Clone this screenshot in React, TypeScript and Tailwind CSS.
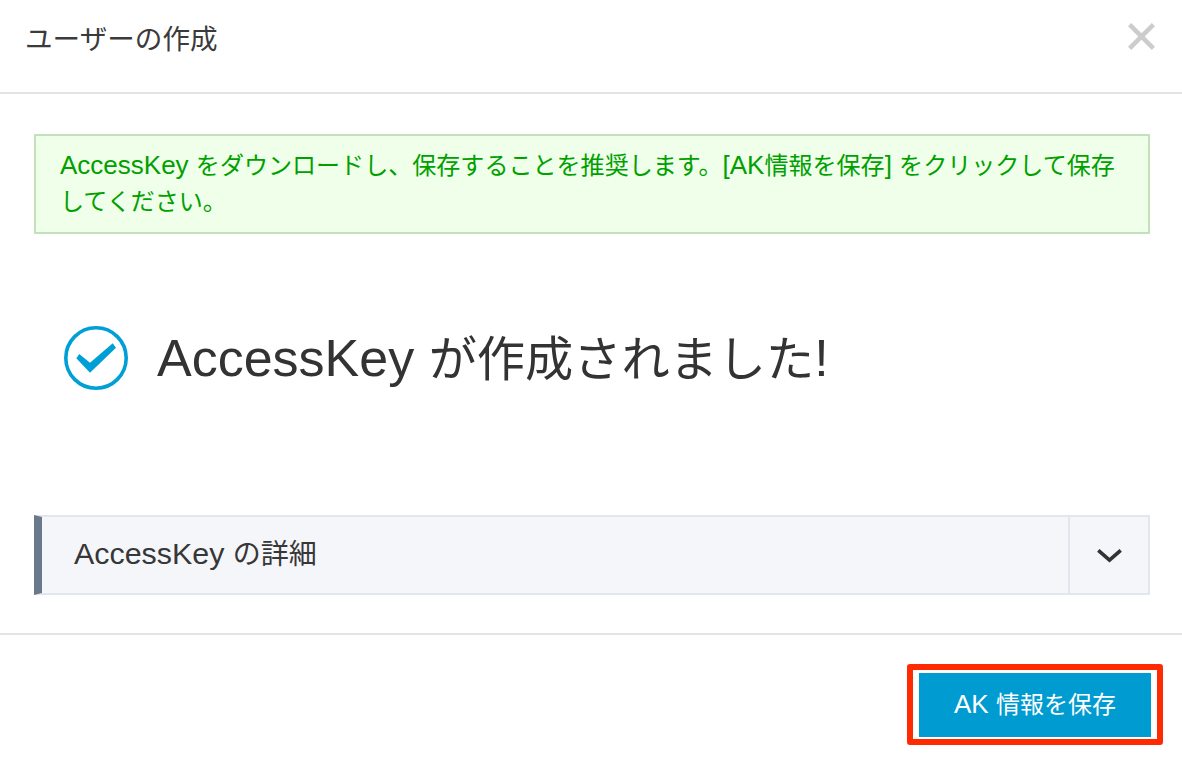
const FONT = "font-['Liberation_Sans','Noto_Sans_CJK_JP',sans-serif]";

export default function App() {
  return (
    <div className={`${FONT} w-[1182px] h-[774px] bg-white flex flex-col overflow-hidden text-[#333]`}>
      {/* Header */}
      <div className="h-[94px] shrink-0 border-b-2 border-[#e4e4e4] flex items-start justify-between pl-[25px] pr-[27px]">
        <h1 className="text-[27.6px] leading-[40px] mt-[20px] font-normal text-[#3b3b3b]">ユーザーの作成</h1>
        <svg width="27" height="27" viewBox="0 0 27 27" fill="none" stroke="#cccccc" strokeWidth="4.5" className="mt-[23px]">
          <path d="M1.6 1.6 L25.4 25.4 M25.4 1.6 L1.6 25.4" />
        </svg>
      </div>

      {/* Body */}
      <div className="h-[541px] shrink-0 border-b-2 border-[#e4e4e4] px-[32px] pt-[40px] flex flex-col">
        <div className="ml-[2px] w-[1116px] h-[100px] border-2 border-[#c3e0b8] bg-[#f0ffe9] pl-[24px] pr-[20px] pt-[11px] text-[24.05px] leading-[36px] text-[#00a000]">
          <span className="text-[26px]">AccessKey </span>をダウンロードし、保存することを推奨します。<span className="text-[26px]">[AK</span>情報を保存<span className="text-[26px]">] </span>をクリックして保存してください。
        </div>

        <div className="flex items-center ml-[32px] mt-[92px] h-[64px]">
          <svg width="64" height="64" viewBox="0 0 64 64" fill="none" className="shrink-0">
            <circle cx="32" cy="32" r="30.2" stroke="#00a0d6" strokeWidth="3.6" />
            <path d="M12.3 32.3 L15.3 28 L26 36.7 L48.7 17.3 L52 21.7 L26 46.7 Z" fill="#00a0d6" />
          </svg>
          <div className="ml-[29px] text-[48.2px] leading-[64px] text-[#333]">
            <span className="text-[52px]">AccessKey </span>が作成されました<span className="text-[52px]">!</span>
          </div>
        </div>

        <div className="ml-[2px] mt-[125px] w-[1116px] h-[80px] flex border-2 border-l-[8px] border-[#e2e6ee] border-l-[#69788a] bg-[#f5f6fa]">
          <div className="flex-1 pl-[32px] text-[28px] leading-[72px] text-[#373737]">
            <span className="text-[30.4px]">AccessKey </span>の詳細
          </div>
          <div className="w-[80px] border-l-2 border-[#e2e6ee] flex items-center justify-center">
            <svg width="25" height="14" viewBox="0 0 25 14" fill="none" stroke="#333333" strokeWidth="3.6" className="mt-[2px]">
              <path d="M1.3 1.3 L12.5 11 L23.7 1.3" />
            </svg>
          </div>
        </div>
      </div>

      {/* Footer */}
      <div className="flex justify-end pr-[19px] pt-[29px]">
        <div className="border-[6px] border-[#ff2a00] rounded-[3px] px-[6px] pt-[3px] pb-[2px]">
          <button className="w-[232px] h-[64px] pb-[2px] bg-[#009bd0] text-white text-[24px] leading-[60px]">
            <span className="text-[26px]">AK </span>情報を保存
          </button>
        </div>
      </div>
    </div>
  );
}
